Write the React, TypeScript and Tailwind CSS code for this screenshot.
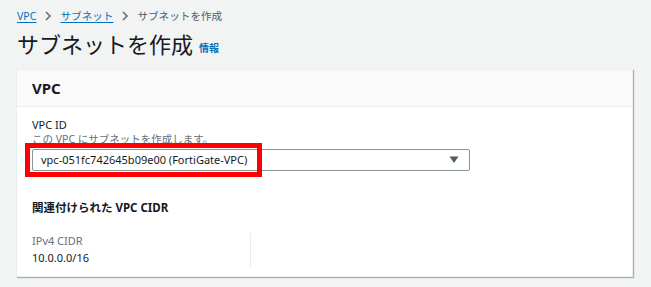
import React from "react";

const font = { fontFamily: '"Noto Sans", "Noto Sans CJK JP", sans-serif' };

export default function App() {
  return (
    <div className="w-[651px] h-[287px] bg-[#f2f3f3] overflow-hidden text-[#16191f]" style={font}>
      <div className="pl-[17px] pt-[9px]">
        <div className="flex items-center text-[10.6px] leading-[14px] h-[14px]">
          <span className="text-[#0073bb] underline underline-offset-2">VPC</span>
          <svg className="mx-[8px]" width="8" height="10" viewBox="0 0 8 10">
            <path d="M2 1 L6 5 L2 9" fill="none" stroke="#687078" strokeWidth="1.6" />
          </svg>
          <span className="text-[#0073bb] underline underline-offset-2">サブネット</span>
          <svg className="mx-[8px]" width="8" height="10" viewBox="0 0 8 10">
            <path d="M2 1 L6 5 L2 9" fill="none" stroke="#687078" strokeWidth="1.6" />
          </svg>
          <span className="text-[#545b64]">サブネットを作成</span>
        </div>
        <div className="flex items-end mt-[7px] h-[28px]">
          <span className="text-[22px] leading-[28px] text-[#16191f]">サブネットを作成</span>
          <span className="ml-[6px] mb-[4px] text-[10px] leading-[12px] font-bold text-[#0073bb]">情報</span>
        </div>
      </div>
      <div className="ml-[16px] mt-[11px] w-[617px] h-[208px] bg-white border border-[#eaeded] shadow-[1px_1px_1px_0_rgba(0,28,36,0.3)]">
        <div className="h-[37px] bg-[#fafafa] border-b border-[#eaeded] flex items-center px-[15px]">
          <span className="text-[15px] font-bold text-[#16191f]">VPC</span>
        </div>
        <div className="px-[15px] pt-[10px]">
          <div className="text-[11px] leading-[15px] text-[#16191f]">VPC ID</div>
          <div className="text-[10.5px] leading-[14px] text-[#687078]">この VPC にサブネットを作成します。</div>
          <div className="relative mt-[3px] w-[438px] h-[22px] border border-[#879596] rounded-[2px] flex items-center pl-[8px] pr-[10px]">
            <span className="text-[11px] leading-[16px] text-[#16191f] flex-1">vpc-051fc742645b09e00 (FortiGate-VPC)</span>
            <svg width="10" height="8" viewBox="0 0 10 8">
              <path d="M0.5 0.5 L9.5 0.5 L5 7 Z" fill="#545b64" />
            </svg>
            <div className="absolute left-[-8px] top-[-7px] w-[237px] h-[34px] border-[5px] border-[#ff0000]" />
          </div>
          <div className="mt-[29px] text-[11.5px] leading-[16px] font-bold text-[#16191f]">関連付けられた VPC CIDR</div>
          <div className="mt-[17px] flex">
            <div className="w-[219px] border-r border-[#eaeded] pb-[2px]">
              <div className="text-[11px] leading-[15px] text-[#687078]">IPv4 CIDR</div>
              <div className="mt-[2px] text-[11px] leading-[15px] text-[#16191f]">10.0.0.0/16</div>
            </div>
          </div>
        </div>
      </div>
    </div>
  );
}
